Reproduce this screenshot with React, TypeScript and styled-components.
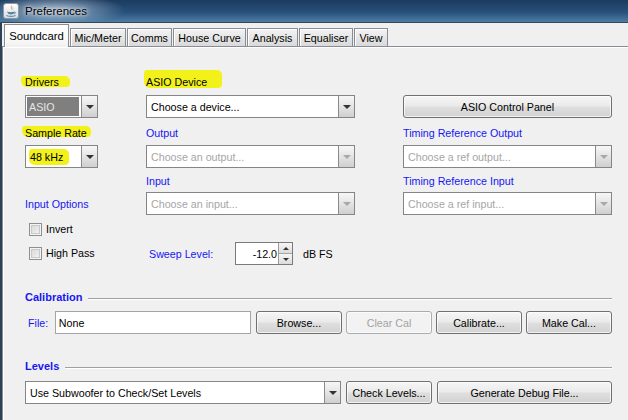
import React from 'react';
import styled, { createGlobalStyle } from 'styled-components';

const GlobalStyle = createGlobalStyle`
	html, body {
		margin: 0;
		padding: 0;
		background: #f0f0f0;
	}
	body {
		font-family: "Liberation Sans", Arial, sans-serif;
		font-size: 10.7px;
		color: #000;
	}
`;

const Window = styled.div`
	width: 628px;
	height: 420px;
	overflow: hidden;
	display: flex;
	flex-direction: column;
`;

const TitleBar = styled.div`
	flex: none;
	height: 22px;
	display: flex;
	align-items: center;
	gap: 6px;
	padding-left: 3px;
	background:
		radial-gradient(ellipse 70px 16px at 55px 10px, rgba(200, 215, 230, 0.75), rgba(200, 215, 230, 0) 100%),
		linear-gradient(to bottom, #1c3b5e 0%, #27507a 55%, #4d7ca4 100%);
	border-bottom: 1px solid #3a4654;
`;

const TitleText = styled.span`
	font-size: 11.5px;
	color: #000;
	text-shadow: 0 0 6px rgba(255, 255, 255, 0.9), 0 0 3px rgba(255, 255, 255, 0.8);
`;

const Frame = styled.div`
	flex: 1;
	display: flex;
	flex-direction: column;
	background: #f0f0f0;
	border-left: 2px solid #2d4259;
`;

const TabStrip = styled.div`
	flex: none;
	height: 23px;
	display: flex;
	align-items: flex-end;
	gap: 1px;
	padding-left: 2px;
	position: relative;
	z-index: 1;
`;

const Tab = styled.div<{ $w: number; $active?: boolean }>`
	box-sizing: border-box;
	width: ${(p) => p.$w}px;
	height: ${(p) => (p.$active ? 23 : 18)}px;
	margin-bottom: ${(p) => (p.$active ? -1 : 0)}px;
	display: flex;
	align-items: center;
	justify-content: center;
	padding-bottom: ${(p) => (p.$active ? 1 : 0)}px;
	border: 1px solid #898c95;
	border-bottom: none;
	box-shadow: inset 1px 1px 0 #fff;
	background: ${(p) =>
		p.$active ? 'linear-gradient(to bottom, #ffffff, #f6f6f6 80%, #f0f0f0)' : 'linear-gradient(to bottom, #f3f3f3, #e6e6e6 50%, #d9d9d9)'};
	font-size: ${(p) => (p.$active ? 11.3 : 10.7)}px;
`;

const TabPanel = styled.div`
	flex: 1;
	border-top: 1px solid #898c95;
	border-left: 1px solid #898c95;
	box-shadow: inset 1px 1px 0 #fff;
	padding: 26px 0 0 22px;
`;

const TopArea = styled.div`
	display: flex;
	width: 587px;
`;

const Column = styled.div<{ $w: number }>`
	width: ${(p) => p.$w}px;
	display: flex;
	flex-direction: column;
	align-items: flex-start;
`;

const Label = styled.div<{ $mt?: number; $blue?: boolean }>`
	height: 18px;
	line-height: 18px;
	margin-top: ${(p) => p.$mt ?? 0}px;
	color: ${(p) => (p.$blue ? '#1717f2' : '#000')};
	white-space: nowrap;
`;

const Marker = styled.span<{ $t: number; $r: number; $b: number; $l: number }>`
	position: relative;
	z-index: 0;
	&::before {
		content: '';
		position: absolute;
		z-index: -1;
		top: ${(p) => p.$t}px;
		right: ${(p) => p.$r}px;
		bottom: ${(p) => p.$b}px;
		left: ${(p) => p.$l}px;
		background: #f2f21a;
		border-radius: 3px 5px 4px 6px;
	}
`;

const Combo = styled.div<{ $w: number; $mt?: number }>`
	box-sizing: border-box;
	width: ${(p) => p.$w}px;
	height: 23px;
	margin-top: ${(p) => p.$mt ?? 0}px;
	display: flex;
	background: #fff;
	border: 1px solid #858585;
	flex: none;
`;

const ComboValue = styled.div<{ $disabled?: boolean; $selected?: boolean }>`
	flex: 1;
	display: flex;
	align-items: center;
	padding-left: ${(p) => (p.$selected ? 2 : 4)}px;
	margin: ${(p) => (p.$selected ? '1px 2px 1px 1px' : '0')};
	background: ${(p) => (p.$selected ? '#7f7f7f' : 'transparent')};
	color: ${(p) => (p.$disabled ? '#a6a6a6' : p.$selected ? '#e6e6e6' : '#000')};
	white-space: nowrap;
	overflow: hidden;
`;

const ArrowButton = styled.div`
	box-sizing: border-box;
	width: 16px;
	flex: none;
	display: flex;
	align-items: center;
	justify-content: center;
	border-left: 1px solid #8a8a8a;
	background: linear-gradient(to bottom, #f7f7f7, #e4e4e4 50%, #cfcfcf);
`;

const Triangle = styled.span<{ $up?: boolean; $disabled?: boolean; $size?: number }>`
	width: 0;
	height: 0;
	border-left: ${(p) => p.$size ?? 4}px solid transparent;
	border-right: ${(p) => p.$size ?? 4}px solid transparent;
	${(p) => (p.$up ? 'border-bottom' : 'border-top')}: ${(p) => p.$size ?? 4}px solid ${(p) => (p.$disabled ? '#a8a8a8' : '#333')};
`;

const Button = styled.div<{ $w: number; $mt?: number; $disabled?: boolean }>`
	box-sizing: border-box;
	width: ${(p) => p.$w}px;
	height: 23px;
	flex: none;
	margin-top: ${(p) => p.$mt ?? 0}px;
	display: flex;
	align-items: center;
	justify-content: center;
	border: 1px solid ${(p) => (p.$disabled ? '#a9acb0' : '#707070')};
	border-radius: 3px;
	box-shadow: inset 0 0 0 1px rgba(255, 255, 255, 0.7);
	background: ${(p) =>
		p.$disabled ? '#f2f2f2' : 'linear-gradient(to bottom, #f6f6f6, #ebebeb 45%, #dedede 55%, #d2d2d2)'};
	color: ${(p) => (p.$disabled ? '#a3a3a3' : '#000')};
	white-space: nowrap;
`;

const CheckRow = styled.div<{ $mt: number }>`
	height: 18px;
	margin-top: ${(p) => p.$mt}px;
	padding-left: 4px;
	display: flex;
	align-items: center;
	gap: 4px;
`;

const CheckBox = styled.span`
	box-sizing: border-box;
	width: 13px;
	height: 13px;
	border: 1px solid #8e8f8f;
	background: linear-gradient(135deg, #d4d4d4, #f7f7f7);
	box-shadow: inset 0 0 0 1px #f4f4f4, inset 0 0 0 2px #c8c8c8;
`;

const SweepRow = styled.div`
	margin-top: 27px;
	height: 23px;
	display: flex;
	align-items: center;
	padding-left: 3px;
`;

const SweepLabel = styled.span`
	width: 86px;
	color: #1717f2;
`;

const Spinner = styled.div`
	box-sizing: border-box;
	width: 58px;
	height: 23px;
	display: flex;
	background: #fff;
	border: 1px solid #7a7a7a;
`;

const SpinValue = styled.div`
	flex: 1;
	display: flex;
	align-items: center;
	justify-content: flex-end;
	padding-right: 1px;
`;

const SpinArrows = styled.div`
	width: 13px;
	display: flex;
	flex-direction: column;
	border-left: 1px solid #9a9a9a;
`;

const SpinArrow = styled.div`
	flex: 1;
	display: flex;
	align-items: center;
	justify-content: center;
	background: linear-gradient(to bottom, #f6f6f6, #dcdcdc);
	& + & {
		border-top: 1px solid #a5a5a5;
	}
`;

const Unit = styled.span`
	margin-left: 10px;
`;

const SectionHeader = styled.div<{ $mt: number }>`
	width: 587px;
	height: 18px;
	margin-top: ${(p) => p.$mt}px;
	display: flex;
	align-items: center;
	gap: 6px;
`;

const SectionTitle = styled.span`
	font-weight: bold;
	color: #1717f2;
	font-size: 11px;
`;

const SectionLine = styled.span`
	flex: 1;
	height: 1px;
	margin-top: 2px;
	background: #a0a0a0;
	box-shadow: 0 1px 0 #fff;
`;

const Row = styled.div<{ $mt: number; $gap?: number }>`
	width: 587px;
	height: 23px;
	margin-top: ${(p) => p.$mt}px;
	display: flex;
	align-items: center;
	gap: ${(p) => p.$gap ?? 4}px;
`;

const FileLabel = styled.span`
	width: 26px;
	padding-left: 3px;
	box-sizing: border-box;
	color: #1717f2;
`;

const TextField = styled.div<{ $w: number }>`
	box-sizing: border-box;
	width: ${(p) => p.$w}px;
	height: 23px;
	display: flex;
	align-items: center;
	padding-left: 3px;
	background: #fff;
	border: 1px solid #a5a5a5;
	margin-right: 1px;
`;

const JavaIcon = () => (
	<svg width="16" height="16" viewBox="0 0 16 16">
		<defs>
			<linearGradient id="jbg" x1="0" y1="0" x2="0" y2="1">
				<stop offset="0" stopColor="#ffffff" />
				<stop offset="1" stopColor="#d6dbe0" />
			</linearGradient>
		</defs>
		<rect x="0.5" y="0.5" width="15" height="15" rx="2.5" fill="url(#jbg)" stroke="#8b96a1" />
		<path d="M8.6 2.2 C6.5 4 9.6 4.8 7.6 7.2 C9.8 5.8 8 4.4 8.6 2.2 Z" fill="#e76f00" />
		<path d="M10 4 C9 5 10.4 5.6 9.4 7 C10.8 6 9.8 5 10 4 Z" fill="#e76f00" />
		<path d="M4.2 8.6 C6 9.3 10 9.3 11.6 8.6 C11.6 10.6 10 11.6 8 11.6 C6 11.6 4.4 10.6 4.2 8.6 Z" fill="#5382a1" />
		<path d="M11.4 9 C13 8.8 13 10.6 11 10.8" fill="none" stroke="#5382a1" strokeWidth="0.9" />
		<path d="M3.4 12.6 C6 13.6 10 13.6 12.6 12.6" fill="none" stroke="#5382a1" strokeWidth="1" />
	</svg>
);

const tabs = [
	{ name: 'Soundcard', w: 65, active: true },
	{ name: 'Mic/Meter', w: 56 },
	{ name: 'Comms', w: 45 },
	{ name: 'House Curve', w: 73 },
	{ name: 'Analysis', w: 51 },
	{ name: 'Equaliser', w: 54 },
	{ name: 'View', w: 34 },
];

type DropProps = {
	w: number;
	mt?: number;
	text: React.ReactNode;
	disabled?: boolean;
	selected?: boolean;
};

const Dropdown = ({ w, mt, text, disabled, selected }: DropProps) => (
	<Combo $w={w} $mt={mt}>
		<ComboValue $disabled={disabled} $selected={selected}>
			{text}
		</ComboValue>
		<ArrowButton>
			<Triangle $disabled={disabled} />
		</ArrowButton>
	</Combo>
);

const App = () => (
	<>
		<GlobalStyle />
		<Window>
			<TitleBar>
				<JavaIcon />
				<TitleText>Preferences</TitleText>
			</TitleBar>
			<Frame>
				<TabStrip>
					{tabs.map((t) => (
						<Tab key={t.name} $w={t.w} $active={t.active}>
							{t.name}
						</Tab>
					))}
				</TabStrip>
				<TabPanel>
					<TopArea>
						<Column $w={121}>
							<Label>
								<Marker $t={0} $r={-11} $b={1} $l={-4}>
									Drivers
								</Marker>
							</Label>
							<Dropdown w={73} mt={4} text="ASIO" selected />
							<Label $mt={6}>
								<Marker $t={-1} $r={-4} $b={2} $l={-3}>
									Sample Rate
								</Marker>
							</Label>
							<Dropdown
								w={73}
								mt={3}
								text={
									<Marker $t={-2} $r={-6} $b={-2} $l={-1}>
										48 kHz
									</Marker>
								}
							/>
							<Label $mt={27} $blue>
								Input Options
							</Label>
							<CheckRow $mt={7}>
								<CheckBox />
								Invert
							</CheckRow>
							<CheckRow $mt={6}>
								<CheckBox />
								High Pass
							</CheckRow>
						</Column>
						<Column $w={257}>
							<Label>
								<Marker $t={-6} $r={-15} $b={0} $l={-2}>
									ASIO Device
								</Marker>
							</Label>
							<Dropdown w={209} mt={4} text="Choose a device..." />
							<Label $mt={6} $blue>
								Output
							</Label>
							<Dropdown w={209} mt={3} text="Choose an output..." disabled />
							<Label $mt={4} $blue>
								Input
							</Label>
							<Dropdown w={209} mt={2} text="Choose an input..." disabled />
							<SweepRow>
								<SweepLabel>Sweep Level:</SweepLabel>
								<Spinner>
									<SpinValue>-12.0</SpinValue>
									<SpinArrows>
										<SpinArrow>
											<Triangle $up $size={3} />
										</SpinArrow>
										<SpinArrow>
											<Triangle $size={3} />
										</SpinArrow>
									</SpinArrows>
								</Spinner>
								<Unit>dB FS</Unit>
							</SweepRow>
						</Column>
						<Column $w={209}>
							<Button $w={209} $mt={22}>
								ASIO Control Panel
							</Button>
							<Label $mt={6} $blue>
								Timing Reference Output
							</Label>
							<Dropdown w={209} mt={3} text="Choose a ref output..." disabled />
							<Label $mt={4} $blue>
								Timing Reference Input
							</Label>
							<Dropdown w={209} mt={2} text="Choose a ref input..." disabled />
						</Column>
					</TopArea>

					<SectionHeader $mt={23}>
						<SectionTitle>Calibration</SectionTitle>
						<SectionLine />
					</SectionHeader>
					<Row $mt={5}>
						<FileLabel>File:</FileLabel>
						<TextField $w={198}>None</TextField>
						<Button $w={86}>Browse...</Button>
						<Button $w={86} $disabled>
							Clear Cal
						</Button>
						<Button $w={86}>Calibrate...</Button>
						<Button $w={86}>Make Cal...</Button>
					</Row>

					<SectionHeader $mt={23}>
						<SectionTitle>Levels</SectionTitle>
						<SectionLine />
					</SectionHeader>
					<Row $mt={6} $gap={5}>
						<Dropdown w={316} text="Use Subwoofer to Check/Set Levels" />
						<Button $w={86}>Check Levels...</Button>
						<Button $w={175}>Generate Debug File...</Button>
					</Row>
				</TabPanel>
			</Frame>
		</Window>
	</>
);

export default App;
